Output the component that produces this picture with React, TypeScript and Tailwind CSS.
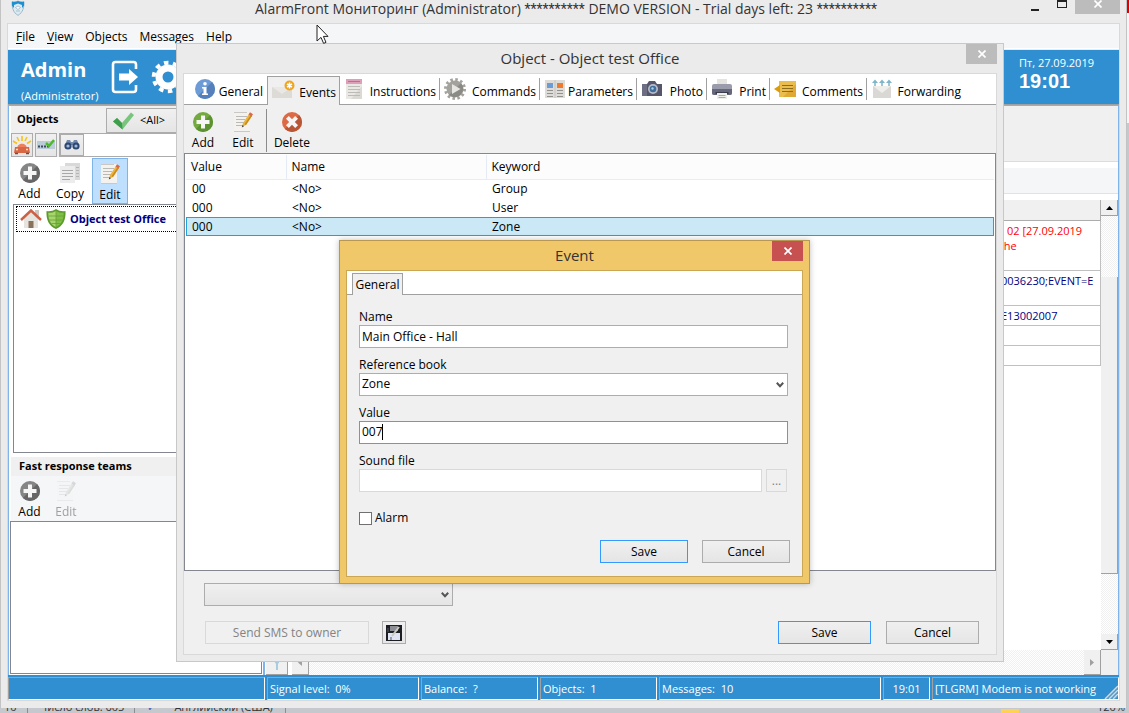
import { useState, type ReactNode } from "react";

type EventRow = { value: string; name: string; keyword: string };

const EVENTS: EventRow[] = [
  { value: "00", name: "<No>", keyword: "Group" },
  { value: "000", name: "<No>", keyword: "User" },
  { value: "000", name: "<No>", keyword: "Zone" },
];

const TABS = [
  { label: "General", icon: <InfoIcon />, size: "w-[83px] pl-2.5" },
  { label: "Events", icon: <MailNewIcon />, size: "w-[73px] pl-1" },
  { label: "Instructions", icon: <NoteIcon />, size: "w-[100px] pl-1" },
  { label: "Commands", icon: <CommandIcon />, size: "w-[100px] pl-1" },
  { label: "Parameters", icon: <ParamsIcon />, size: "w-[97px] pl-1" },
  { label: "Photo", icon: <CameraIcon />, size: "w-[70px] pl-1" },
  { label: "Print", icon: <PrinterIcon />, size: "w-[63px] pl-1" },
  { label: "Comments", icon: <CommentIcon />, size: "w-[97px] pl-1" },
  { label: "Forwarding", icon: <ForwardIcon />, size: "w-[98px] pl-1" },
];

const FACE = "border bg-linear-to-b from-[#f0f0f0] to-[#e5e5e5] text-center";
const BUTTON = `${FACE} border-[#acacac]`;
const DEFAULT_BUTTON = `${FACE} border-[#3399ff]`;
const HATCH = "bg-[repeating-conic-gradient(#f0f0f0_0_25%,#fff_0_50%)] bg-[length:2px_2px]";

export default function App() {
  return (
    <div className="relative flex h-screen flex-col overflow-hidden bg-[#c5c8cd] font-['Open_Sans','Noto_Sans',sans-serif] text-xs text-black">
      <div className="flex min-h-0 flex-1">
        <MainWindow />
        <div className="w-[3px] shrink-0 border-l border-[#c3c3c3] bg-[#c5c8cd]">
          <div className="h-[13px] bg-[#e00000]" />
          <div className="h-[110px] bg-[#f4f5f7]" />
        </div>
      </div>
      <Taskbar />
      <ObjectDialog />
      <EventDialog />
      <svg className="absolute left-[316px] top-[24px]" width="14" height="21" viewBox="0 0 14 21" aria-hidden="true">
        <path d="M1 1v16l4-3.6 2.6 6 2.4-1-2.6-6H12z" fill="#fff" stroke="#222" />
      </svg>
    </div>
  );
}

/* ---------- main window ---------- */

function MainWindow() {
  return (
    <div className="flex min-w-0 flex-1 flex-col border-l border-[#c3c3c3] bg-[#ebebeb] pb-[7px] pl-[6px] pr-[6px]">
      <header className="flex h-[23px] shrink-0 items-start justify-between pl-1">
        <svg width="14" height="16" viewBox="0 0 14 16" aria-hidden="true">
          <path d="M7 1c2 1 4 1 6 .8 0 6-1 10.5-6 13.6C2 12.3 1 7.8 1 1.8 3 2 5 2 7 1z" fill="#dceaf3" stroke="#9db9c9" />
          <path d="M7 1c2 1 4 1 6 .8v4L11 8V5L7 3.5 3 5v3L1 5.8v-4C3 2 5 2 7 1z" fill="#1e90cf" />
          <path d="M4.5 7.500 7 6l2.5 1.500L7 9.500zM5 11h4" fill="#fff" stroke="#8fb0c2" strokeWidth=".7" />
        </svg>
        <h1 className="flex-1 pl-[86px] text-center text-sm leading-[18px] text-[#333]">
          AlarmFront Мониторинг (Administrator) <Stars /> DEMO VERSION - Trial days left: 23 <Stars />
        </h1>
        <div className="flex">
          <button aria-label="Minimize" className="h-[14px] w-[27px]">
            <span className="mx-auto mt-[5px] block h-[2px] w-2 bg-[#222]" />
          </button>
          <button aria-label="Maximize" className="flex h-[14px] w-[27px] items-start justify-center">
            <span className="block h-2 w-2.5 border border-t-2 border-[#222]" />
          </button>
          <button aria-label="Close" className="flex h-[14px] w-[45px] items-start justify-center bg-[#bcbcbc]">
            <CrossIcon />
          </button>
        </div>
      </header>

      <div className="flex min-h-0 flex-1 flex-col border border-[#d9d9d9]">
        <nav className="flex h-[25px] shrink-0 gap-3 border-b border-white bg-[#f5f6f7] pl-2 leading-[25px]">
          <button><u className="underline-offset-2">F</u>ile</button>
          <button><u className="underline-offset-2">V</u>iew</button>
          <button>Objects</button>
          <button>Messages</button>
          <button>Help</button>
        </nav>

        <div className="mt-px flex h-[55px] shrink-0 justify-between border-b border-[#a0a0a0] bg-[#2f8fd0] pl-[13px] text-white">
          <div className="flex">
            <div className="w-[90px]">
              <div className="pt-1 text-xl font-bold leading-8">Admin</div>
              <div className="text-[11px] leading-[19px]">(Administrator)</div>
            </div>
            <button aria-label="Log out" className="self-center">
              <svg width="28" height="34" viewBox="0 0 28 34" aria-hidden="true">
                <path d="M25 9V4.500A2.500 2.500 0 0 0 22.500 2h-18A2.500 2.500 0 0 0 2 4.500v25A2.500 2.500 0 0 0 4.500 32h18a2.500 2.500 0 0 0 2.500-2.500V25" fill="none" stroke="#fff" strokeWidth="2.600" />
                <path d="M8 13.500h10V9l9 8-9 8v-4.500H8z" fill="#fff" />
              </svg>
            </button>
            <button aria-label="Settings" className="ml-3 self-center">
              <svg width="34" height="34" viewBox="-17 -17 34 34" aria-hidden="true">
                <circle r="9" fill="none" stroke="#fff" strokeWidth="7" />
                <circle r="14.3" fill="none" stroke="#fff" strokeWidth="4" strokeDasharray="4.5 4.486" />
              </svg>
            </button>
          </div>
          <div className="w-[100px] pt-1">
            <div className="text-[11px] leading-[18px]">Пт, 27.09.2019</div>
            <div className="font-['Liberation_Sans',Arial,sans-serif] text-xl font-bold leading-[18px]">19:01</div>
          </div>
        </div>

        <div className="flex min-h-0 flex-1 border-x border-t border-[#7eb4ea]">
          <Sidebar />
          <MessagesPanel />
        </div>
        <StatusBar />
      </div>
    </div>
  );
}

function Stars() {
  return <span className="font-[Roboto,sans-serif]">**********</span>;
}

function Sidebar() {
  return (
    <aside className="flex w-[256px] shrink-0 flex-col border-r-2 border-[#7eb4ea] bg-white pl-0.5 pr-px">
      <div className="flex h-[27px] shrink-0 items-start bg-[#f0f0f0] pt-0.5">
        <h2 className="w-[95px] pl-1.5 text-[11px] font-bold leading-[22px]">Objects</h2>
        <button className={`${BUTTON} flex h-[25px] flex-1 items-center gap-1.5 pl-1.5 text-[11px]`}>
          <svg width="21" height="18" viewBox="0 0 21 18" aria-hidden="true">
            <path d="M0 9.500 4 6l5 5 9-10.500L21 3 9.500 17.500z" fill="#79c57e" />
            <path d="M0 9.500 4 6l5 5 .5 6.500z" fill="#3d9e4b" />
          </svg>
          &lt;All&gt;
        </button>
      </div>
      <div className="flex h-6 shrink-0 gap-[2px] bg-[#f0f0f0]">
        <button aria-label="Alarms" className={`${BUTTON} flex w-[22px] items-center justify-center`}>
          <SirenIcon />
        </button>
        <button aria-label="Status" className={`${BUTTON} flex w-[22px] items-center justify-center`}>
          <svg width="18" height="16" viewBox="0 0 18 16" aria-hidden="true">
            <path d="M0 4h18v8H0z" fill="#bccbd8" />
            <path d="M1 9.500h11" stroke="#3c4b62" strokeWidth="2" strokeDasharray="2 1" />
            <path d="m9 6 3 3 5-6" fill="none" stroke="#4fb82f" strokeWidth="2.500" />
          </svg>
        </button>
        <div className="flex flex-1 border border-[#acacac] bg-white">
          <button aria-label="Search" className={`${BUTTON} flex w-6 items-center justify-center`}>
            <svg width="16" height="12" viewBox="0 0 16 12" aria-hidden="true">
              <path d="M3 1h3l1 2h2l1-2h3l2 5H1z" fill="#7288ad" />
              <circle cx="4" cy="7" r="3.600" fill="#2e4672" />
              <circle cx="12" cy="7" r="3.600" fill="#2e4672" />
              <circle cx="4" cy="7" r="1.600" fill="#9fb9dd" />
              <circle cx="12" cy="7" r="1.600" fill="#9fb9dd" />
            </svg>
          </button>
          <input aria-label="Search objects" className="min-w-0 flex-1 px-1 outline-none" />
        </div>
      </div>
      <div className="flex h-[47px] shrink-0 pt-px">
        <ToolButton label="Add" icon={<CircleIcon tone="gray" />} size="w-[37px]" />
        <ToolButton label="Copy" icon={<CopyIcon />} size="w-11" />
        <ToolButton label="Edit" icon={<PencilIcon />} size="w-9 border border-[#7eb4ea] bg-[#bfdfff]" />
      </div>
      <div className="ml-[2px] min-h-0 flex-1 border border-[#828790] p-px pl-[2px]">
        <button className="flex h-[26px] w-full items-center gap-1 border border-dotted border-black pl-[3px] text-[11px] font-bold text-[#000080]">
          <HouseIcon />
          <ShieldIcon />
          Object test Office
        </button>
      </div>
      <h2 className="mt-1 h-[19px] shrink-0 bg-[#f0f0f0] pl-2 text-[11px] font-bold leading-[18px]">Fast response teams</h2>
      <div className="flex h-[45px] shrink-0 bg-[#f5f6f7]">
        <ToolButton label="Add" icon={<CircleIcon tone="gray" />} size="w-[37px]" />
        <ToolButton label="Edit" icon={<PencilIcon />} size="w-9 text-[#a0a0a0] grayscale" disabled />
      </div>
      <div className="mb-px -ml-px h-[153px] shrink-0 border border-[#828790] bg-white" />
    </aside>
  );
}

function MessagesPanel() {
  return (
    <main className="flex min-w-0 flex-1 flex-col bg-white pl-px">
      <div className="h-[55px] shrink-0 bg-[#f0f0f0]" />
      <div className="mb-1.5 h-px shrink-0 bg-[#dcdcdc]" />
      <div className="h-[26px] shrink-0 border-b border-[#dfe3e8] bg-[#f5f6f7]" />
      <div className="mt-1.5 flex min-h-0 flex-1">
        <div className="min-w-0 flex-1">
          <table className="w-full table-fixed border-collapse text-[11px] leading-[15px]">
            <thead>
              <tr className="h-5 bg-[#f0f0f0]">
                <th className="border-b border-r border-[#acacac]" />
                <th className="w-[100px] border-b border-r border-[#acacac]" />
              </tr>
            </thead>
            <tbody className="whitespace-nowrap align-top">
              <MessageRow size="h-[50px] text-[#ff0000]">
                <div className="pl-1.5">02 [27.09.2019</div>
                <div>&nbsp;he</div>
              </MessageRow>
              <MessageRow size="h-[35px] text-[#000080]">0036230;EVENT=E</MessageRow>
              <MessageRow size="h-5 text-[#000080]">E13002007</MessageRow>
              <MessageRow size="h-5" />
              <MessageRow size="h-5" />
            </tbody>
          </table>
        </div>
        <div className={`${HATCH} flex w-[17px] shrink-0 flex-col`}>
          <button aria-label="Scroll up" className="flex h-4 shrink-0 items-center justify-center border-b border-r border-[#a0a0a0] bg-[#f0f0f0]">
            <svg width="7" height="4" viewBox="0 0 7 4"><path d="M0 4 3.500 0 7 4z" /></svg>
          </button>
          <div className="h-[61px] shrink-0" />
          <div className="flex-1 border-b border-r border-[#a0a0a0] bg-[#f0f0f0]" />
          <div className="h-[60px] shrink-0" />
          <button aria-label="Scroll down" className="flex h-4 shrink-0 items-center justify-center border-b border-r border-[#a0a0a0] bg-[#f0f0f0]">
            <svg width="7" height="4" viewBox="0 0 7 4"><path d="M0 0h7L3.500 4z" /></svg>
          </button>
        </div>
      </div>
      <div className="flex h-[25px] shrink-0 items-stretch">
        <button aria-label="Filter" className="mr-1 flex w-[22px] items-end justify-center border-b border-r border-[#a0a0a0] bg-[#f0f0f0] pb-1">
          <svg width="10" height="12" viewBox="0 0 10 12"><path d="M0 0h10L6 6v6H4V6z" fill="#a9cbe0" /></svg>
        </button>
        <div className={`${HATCH} flex flex-1 justify-between`}>
          <button aria-label="Scroll left" className="flex w-[17px] items-center justify-center border-b border-r border-[#a0a0a0] bg-[#f0f0f0]">
            <svg width="4" height="7" viewBox="0 0 4 7"><path d="M4 0v7L0 3.500z" fill="#a0a0a0" /></svg>
          </button>
          <button aria-label="Scroll right" className="flex w-[17px] items-center justify-center border-b border-r border-[#a0a0a0] bg-[#f0f0f0]">
            <svg width="4" height="7" viewBox="0 0 4 7"><path d="M0 0v7l4-3.500z" fill="#a0a0a0" /></svg>
          </button>
        </div>
        <div className="w-[17px] bg-[#f0f0f0]" />
      </div>
    </main>
  );
}

function MessageRow({ size, children }: { size: string; children?: ReactNode }) {
  return (
    <tr className={size}>
      <td className="border-b border-r border-[#c0c0c0]" />
      <td className="overflow-hidden border-b border-r border-[#c0c0c0] pt-0.5">{children}</td>
    </tr>
  );
}

function StatusBar() {
  const cell = "overflow-hidden whitespace-pre border border-[#a0a0a0] border-b-white border-r-white pl-[2px]";
  return (
    <footer className="flex h-[25px] shrink-0 gap-[2px] bg-[#2f8fd0] pt-[2px] text-[11px] leading-[22px] text-white">
      <div className={`${cell} w-[257px]`} />
      <div className={`${cell} w-[152px]`}>Signal level:  0%</div>
      <div className={`${cell} w-[117px]`}>Balance:  ?</div>
      <div className={`${cell} w-[117px]`}>Objects:  1</div>
      <div className={`${cell} flex-1`}>Messages:  10</div>
      <div className={`${cell} w-[47px] pr-[2px] text-center`}>19:01</div>
      <div className={`${cell} flex w-[187px]`}>
        <span>[TLGRM] Modem is not working</span>
        <svg className="ml-auto mt-auto shrink-0" width="14" height="14" viewBox="0 0 14 14" aria-hidden="true">
          <path d="M1 14 14 1M5 14l9-9M9 14l5-5" stroke="#d9d9d9" strokeWidth="1.500" />
          <path d="m3 14 11-11M7 14l7-7M11 14l3-3" stroke="#8a8a8a" />
        </svg>
      </div>
    </footer>
  );
}

function Taskbar() {
  return (
    <div className="flex h-[5px] shrink-0 items-end gap-2.5 overflow-hidden bg-[#c5c8cd] pl-1 text-[11px] leading-3 text-[#333]">
      <span>10</span>
      <span className="border-l border-[#8a8d92] pl-3">Число слов: 605</span>
      <span className="border-l border-[#8a8d92] pl-3 text-[#3a62c4]">✓</span>
      <span className="border-r border-[#8a8d92] pl-2 pr-3">Английский (США)</span>
      <span className="ml-auto h-1 w-[18px] bg-[#ffd257]" />
      <span className="pl-[68px] pr-1">120%</span>
    </div>
  );
}

/* ---------- object dialog ---------- */

function ObjectDialog() {
  const [tab, setTab] = useState("Events");
  const [selected, setSelected] = useState(2);

  return (
    <section className="absolute bottom-[51px] left-[176px] right-[125px] top-[43px] flex flex-col border border-[#c8c8c8] bg-[#ebebeb] px-[6px] pb-[6px]">
      <header className="relative flex h-[29px] shrink-0 items-center justify-center pb-0.5 text-[15px] text-[#333]">
        <h2>Object - Object test Office</h2>
        <button aria-label="Close" className="absolute right-0 top-0 flex h-5 w-[31px] items-center justify-center bg-[#bcbcbc]">
          <CrossIcon />
        </button>
      </header>

      <div className="flex min-h-0 flex-1 flex-col border border-[#d9d9d9] bg-[#f0f0f0]">
        <div role="tablist" className="flex h-[31px] shrink-0 items-stretch border-b border-[#a0a0a0] bg-white">
          {TABS.map((t, i) => (
            <button
              key={t.label}
              role="tab"
              aria-selected={tab === t.label}
              onClick={() => setTab(t.label)}
              className={`${t.size} flex shrink-0 items-center justify-between pr-[3px] ${
                tab === t.label
                  ? "-mb-px mt-0.5 border border-b-0 border-[#a0a0a0] bg-[#f0f0f0] pb-0.5"
                  : `my-1 border-r ${i < 2 || i === TABS.length - 1 ? "border-transparent" : "border-[#a0a0a0]"}`
              }`}
            >
              {t.icon}
              <span className="pt-1.5 leading-6">{t.label}</span>
            </button>
          ))}
        </div>

        <div className="flex h-12 shrink-0 pt-0.5">
          <ToolButton label="Add" icon={<CircleIcon tone="green" />} size="w-[38px]" />
          <ToolButton label="Edit" icon={<PencilIcon />} size="w-[42px]" />
          <div className="mb-px ml-0.5 mt-0.5 border-l border-[#8c8c8c]" />
          <ToolButton label="Delete" icon={<CircleIcon tone="red" />} size="w-[50px]" />
        </div>

        <div className="min-h-0 flex-1 border border-[#828790] bg-white p-px">
          <table className="w-full table-fixed border-collapse text-left leading-[17px]">
            <thead>
              <tr className="h-6 border-b border-[#e5ecf8] bg-[#fcfcfc]">
                <th className="w-[100px] border-r border-[#e5ecf8] pl-[5px] font-normal">Value</th>
                <th className="w-[200px] border-r border-[#e5ecf8] pl-[5px] font-normal">Name</th>
                <th className="pl-[5px] font-normal">Keyword</th>
              </tr>
            </thead>
            <tbody>
              {EVENTS.map((row, i) => (
                <tr
                  key={i}
                  onClick={() => setSelected(i)}
                  className={`h-[19px] ${i === selected ? "bg-[#cbe8f6] outline outline-1 -outline-offset-1 outline-[#26a0da]" : ""}`}
                >
                  <td className="pl-1.5">{row.value}</td>
                  <td className="pl-1.5">{row.name}</td>
                  <td className="pl-1.5">{row.keyword}</td>
                </tr>
              ))}
            </tbody>
          </table>
        </div>

        <div className="shrink-0 pb-2.5 pl-5 pr-[17px] pt-3">
          <div className="relative w-[249px]">
            <select aria-label="Template" className={`${BUTTON} block h-[23px] w-full appearance-none`} />
            <ChevronIcon />
          </div>
          <div className="mt-[15px] flex h-[23px] items-stretch pl-px">
            <button disabled className="w-[164px] border border-[#d9d9d9] text-[#838383]">Send SMS to owner</button>
            <button aria-label="Save to file" className={`${BUTTON} ml-[13px] flex w-6 items-center justify-center`}>
              <svg width="16" height="16" viewBox="0 0 16 16" aria-hidden="true">
                <path d="M0 0h16v16H0z" fill="#1d1d24" />
                <path d="M4 1h8v5H4z" fill="#8a8d92" />
                <path d="M2 8h12v7H2z" fill="#dfe4f2" />
                <path d="m6 11 7-9" stroke="#c9c9bd" strokeWidth="2" />
                <path d="M2 3v4M5 12v3" stroke="#55565e" />
              </svg>
            </button>
            <button className={`${DEFAULT_BUTTON} ml-auto w-[93px]`}>Save</button>
            <button className={`${BUTTON} ml-[15px] w-[93px]`}>Cancel</button>
          </div>
        </div>
      </div>
    </section>
  );
}

/* ---------- event dialog ---------- */

function EventDialog() {
  return (
    <section className="absolute left-[339px] top-[240px] w-[471px] border border-[#b89850] bg-[#f0c869] px-[6px] pb-[6px] shadow-[0_0_6px_rgba(0,0,0,0.25)]">
      <header className="relative flex h-[29px] items-center justify-center pb-0.5 text-[15px] text-[#333]">
        <h2>Event</h2>
        <button aria-label="Close" className="absolute right-0 top-0 flex h-5 w-[31px] items-center justify-center bg-[#c75050]">
          <CrossIcon />
        </button>
      </header>

      <form className="border border-[#cba655] bg-[#f0f0f0]" onSubmit={(e) => e.preventDefault()}>
        <div role="tablist" className="flex h-6 border-b border-[#a0a0a0] bg-white pl-[5px] pt-0.5">
          <button type="button" role="tab" aria-selected="true" className="-mb-px w-[51px] border border-b-0 border-[#a0a0a0] bg-[#f0f0f0]">
            General
          </button>
        </div>

        <div className="pb-[13px] pl-3 pr-3 pt-3.5">
          <div className="pr-[2px]">
            <label htmlFor="event-name" className="block h-4 leading-4">Name</label>
            <input id="event-name" defaultValue="Main Office - Hall" className="block h-[23px] w-full border border-[#abadb3] bg-white px-0.5 pb-px outline-none" />

            <label htmlFor="event-book" className="mt-[9px] block h-4 leading-4">Reference book</label>
            <div className="relative">
              <select id="event-book" defaultValue="Zone" className="block h-[23px] w-full appearance-none border border-[#abadb3] bg-white px-0.5 pb-px outline-none">
                <option>Group</option>
                <option>User</option>
                <option>Zone</option>
              </select>
              <ChevronIcon />
            </div>

            <label htmlFor="event-value" className="mt-[9px] block h-4 leading-4">Value</label>
            <div className="flex h-[23px] items-center border border-[#569de5] bg-white pb-px">
              <input id="event-value" defaultValue="007" size={3} className="w-[23px] pl-0.5 outline-none" />
              <span className="-ml-px h-4 w-px bg-black" />
            </div>

            <label htmlFor="event-sound" className="mt-[9px] block h-4 leading-4">Sound file</label>
            <div className="flex h-[23px] gap-1 pr-px">
              <input id="event-sound" disabled className="min-w-0 flex-1 border border-[#d9d9d9] bg-white" />
              <button type="button" disabled className="w-[21px] border border-[#d9d9d9] text-[#838383]">...</button>
            </div>

            <label className="mt-[18px] flex h-4 items-center gap-[3px]">
              <input type="checkbox" className="size-[13px] appearance-none border border-[#707070] bg-white checked:bg-[#569de5]" />
              Alarm
            </label>
          </div>

          <div className="mt-3.5 flex h-[23px] justify-end gap-[14px]">
            <button className={`${DEFAULT_BUTTON} w-[88px]`}>Save</button>
            <button type="button" className={`${BUTTON} w-[88px]`}>Cancel</button>
          </div>
        </div>
      </form>
    </section>
  );
}

/* ---------- shared bits ---------- */

function ToolButton({ label, icon, size, disabled }: { label: string; icon: ReactNode; size: string; disabled?: boolean }) {
  return (
    <button disabled={disabled} className={`${size} flex flex-col items-center gap-px pt-1`}>
      <span className={disabled ? "opacity-25" : ""}>{icon}</span>
      <span className="leading-[18px]">{label}</span>
    </button>
  );
}

function CrossIcon() {
  return (
    <svg width="8" height="8" viewBox="0 0 8 8" aria-hidden="true">
      <path d="m.5.5 7 7m0-7-7 7" stroke="#fff" strokeWidth="1.700" />
    </svg>
  );
}

function ChevronIcon() {
  return (
    <svg className="pointer-events-none absolute right-1 top-[9px]" width="8" height="6" viewBox="0 0 8 6" aria-hidden="true">
      <path d="m.8.8 3.200 3.400L7.200.8" fill="none" stroke="#555" strokeWidth="2" />
    </svg>
  );
}

function CircleIcon({ tone }: { tone: "gray" | "green" | "red" }) {
  const [light, dark] = { gray: ["#858585", "#666"], green: ["#74aa3f", "#5d9230"], red: ["#dd6a45", "#b95636"] }[tone];
  return (
    <svg className="block" width="22" height="22" viewBox="0 0 22 22" aria-hidden="true">
      <circle cx="11" cy="11" r="10" fill={light} />
      <path d="M18.100 3.900A10 10 0 0 1 3.900 18.100z" fill={dark} />
      <path
        d="M9 4.500h4V9h4.500v4H13v4.500H9V13H4.500V9H9z"
        fill="#f6f6f6"
        transform={tone === "red" ? "rotate(45 11 11)" : undefined}
      />
    </svg>
  );
}

function PencilIcon() {
  return (
    <svg className="block" width="22" height="22" viewBox="0 0 22 22" aria-hidden="true">
      <path d="M2 1h16v20H2z" fill="#f3f2ee" />
      <path d="M2 20.500h16M2 1.500h13" stroke="#c9c8c2" />
      <path d="M4 5.500h11M4 8.500h9M4 11.500h8M4 14.500h6" stroke="#b9b9b5" />
      <path d="m10 16 1-4 6-9 3 2-6 9z" fill="#edb33c" />
      <path d="m12.500 13.200 6-9L20 5l-6 9z" fill="#c98c20" />
      <path d="m16.500 3.500 1.500-2.200 3 2L19.500 5.500z" fill="#d9694a" />
      <path d="m9.800 16.500.6-2.500 1.600 1.200z" fill="#444" />
    </svg>
  );
}

function CopyIcon() {
  return (
    <svg className="block" width="22" height="22" viewBox="0 0 22 22" aria-hidden="true">
      <path d="M6 1h15v17H6z" fill="#d9d9d9" />
      <path d="M17 5.500h3M17 8.500h3M17 11.500h3M17 14.500h3" stroke="#b5b5b5" />
      <path d="M1 4h15v17H1z" fill="#ececec" />
      <path d="M3 8.500h11M3 11.500h11M3 14.500h11M3 17.500h8" stroke="#a8a8a8" />
    </svg>
  );
}

function SirenIcon() {
  return (
    <svg width="20" height="20" viewBox="0 0 20 20" aria-hidden="true">
      <path d="M10 1v5M5 2l2 4M15 2l-2 4M1 6l4 2.500M19 6l-4 2.500" stroke="#f6c21c" strokeWidth="1.600" />
      <path d="M5 14c0-7 10-7 10 0z" fill="#ee8159" />
      <path d="M3 12h14l1 6H2z" fill="#d96746" />
      <path d="M4 14.500h2M14 14.500h2" stroke="#ffe9a0" strokeWidth="1.500" />
      <path d="M3 18.500h3M14 18.500h3" stroke="#555" strokeWidth="1.500" />
    </svg>
  );
}

function HouseIcon() {
  return (
    <svg width="22" height="20" viewBox="0 0 22 20" aria-hidden="true">
      <path d="M15 1h4v8h-4z" fill="#c9c8c2" />
      <path d="M4 9.500 11 3l7 6.500V19H4z" fill="#e5e4de" />
      <path d="M8.500 12h5v7h-5z" fill="#8a715b" />
      <path d="m1 11 10-9.500L21 11" fill="none" stroke="#cb6047" strokeWidth="2.500" />
    </svg>
  );
}

function ShieldIcon() {
  return (
    <svg width="20" height="20" viewBox="0 0 20 20" aria-hidden="true">
      <path d="M10 0c3 2 6 2.500 9.500 2C20 11 17 17 10 20 3 17 0 11 .5 2 4 2.500 7 2 10 0z" fill="#5c9a2c" />
      <path d="M10 2c2.600 1.500 5 2 7.700 1.800C17.700 11 15.500 15.500 10 18z" fill="#7fbf45" />
      <path d="M10 2C7.400 3.500 5 4 2.300 3.800 2.300 11 4.500 15.500 10 18z" fill="#a9d56f" />
      <path d="M10 7h7.500M2.500 7H10M3.200 11h13.600M5.500 14.500h9M10 2v16" stroke="#679f38" strokeWidth=".8" />
    </svg>
  );
}

function InfoIcon() {
  return (
    <svg width="22" height="22" viewBox="0 0 22 22" aria-hidden="true">
      <circle cx="11" cy="11" r="10" fill="#6d9bd6" />
      <path d="M18.100 3.900A10 10 0 0 1 3.900 18.100z" fill="#5580bb" />
      <circle cx="11" cy="5.800" r="1.800" fill="#fff" />
      <path d="M8 9h4.500v6.500H14V17H8v-1.500h1.500v-5H8z" fill="#fff" />
    </svg>
  );
}

function MailNewIcon() {
  return (
    <svg width="23" height="22" viewBox="0 0 23 22" aria-hidden="true">
      <path d="M0 8h20v11H0z" fill="#dcdbd6" />
      <path d="m0 8 10 7L20 8z" fill="#e9e8e4" />
      <circle cx="17.500" cy="6.500" r="5" fill="#f0a51e" />
      <path d="M17.500 3.500v6M15 5l5 3M20 5l-5 3" stroke="#fff" strokeWidth="1.500" />
    </svg>
  );
}

function NoteIcon() {
  return (
    <svg width="20" height="22" viewBox="0 0 20 22" aria-hidden="true">
      <path d="M2 1h16v20H2z" fill="#e9e8e4" />
      <path d="M18 8v13H7z" fill="#dad9d4" />
      <path d="M2 1h16v5H2z" fill="#dda0b8" />
      <path d="M4 3.500h12" stroke="#b77290" />
      <path d="M4 8.500h12M4 11.500h12M4 14.500h12M4 17.500h12" stroke="#bcbbb6" />
    </svg>
  );
}

function CommandIcon() {
  return (
    <svg width="22" height="22" viewBox="-11 -11 22 22" aria-hidden="true">
      <circle r="8.500" fill="#a3a29c" />
      <circle r="9.500" fill="none" stroke="#a3a29c" strokeWidth="3" strokeDasharray="2.500 2.474" />
      <path d="M6 -6A8.500 8.500 0 0 1 -6 6z" fill="#8b8a84" />
      <path d="m-3-5 8.500 5L-3 5z" fill="#e6e6e2" />
    </svg>
  );
}

function ParamsIcon() {
  return (
    <svg width="22" height="20" viewBox="0 0 22 20" aria-hidden="true">
      <path d="M1 1h20v18H1z" fill="#dddcd8" />
      <path d="M11 1v18" stroke="#c5c4bf" />
      <path d="M3 4h6v5H3z" fill="#6d9bd6" />
      <path d="M13 4h6v5h-6z" fill="#ee7a2e" />
      <path d="M3 11.500h6M3 14.500h6M3 17.500h6M13 11.500h6M13 14.500h6M13 17.500h6" stroke="#92918d" />
    </svg>
  );
}

function CameraIcon() {
  return (
    <svg width="22" height="16" viewBox="0 0 22 16" aria-hidden="true">
      <path d="M1 3h5l2-3h6l2 3h5v12H1z" fill="#55566b" />
      <path d="M1 3h5v12H1z" fill="#6d6e83" />
      <circle cx="12" cy="8" r="5" fill="#b9bcc8" />
      <circle cx="12" cy="8" r="3.300" fill="#3f6d9c" />
      <circle cx="11.500" cy="7.500" r="1.200" fill="#a9cbe8" />
    </svg>
  );
}

function PrinterIcon() {
  return (
    <svg width="22" height="22" viewBox="0 0 22 22" aria-hidden="true">
      <path d="M6 1h10v7H6z" fill="#e4e3df" />
      <rect x="1" y="6" width="20" height="11" rx="2" fill="#9b9cab" />
      <path d="M1 11h20v4a2 2 0 0 1-2 2H3a2 2 0 0 1-2-2z" fill="#66677b" />
      <path d="M4.500 14h13v2h-13z" fill="#3b3c4b" />
      <path d="M6 15h10v6H6z" fill="#efefec" />
      <path d="M7.500 17.500h7M7.500 19.500h7" stroke="#aaa" />
    </svg>
  );
}

function CommentIcon() {
  return (
    <svg width="23" height="18" viewBox="0 0 23 18" aria-hidden="true">
      <path d="M5 1h17v16H5z" fill="#eabd4e" />
      <path d="M22 4v13H9z" fill="#dfa933" />
      <path d="m0 9 6-4v8z" fill="#dd9b0c" />
      <path d="M8 5.500h11M8 8.500h11M8 11.500h11" stroke="#8d6b1f" />
    </svg>
  );
}

function ForwardIcon() {
  return (
    <svg width="22" height="20" viewBox="0 0 22 20" aria-hidden="true">
      <path d="M2 7h18v12H2z" fill="#d9d8d4" />
      <path d="m2 7 9 7 9-7z" fill="#efeeea" />
      <path d="M4 7V3M11 7V3M18 7V3" stroke="#7fb5c8" strokeWidth="1.500" />
      <path d="m1 4 3-3.500L7 4zM8 4l3-3.500L14 4zM15 4l3-3.500L21 4z" fill="#7fb5c8" />
    </svg>
  );
}
